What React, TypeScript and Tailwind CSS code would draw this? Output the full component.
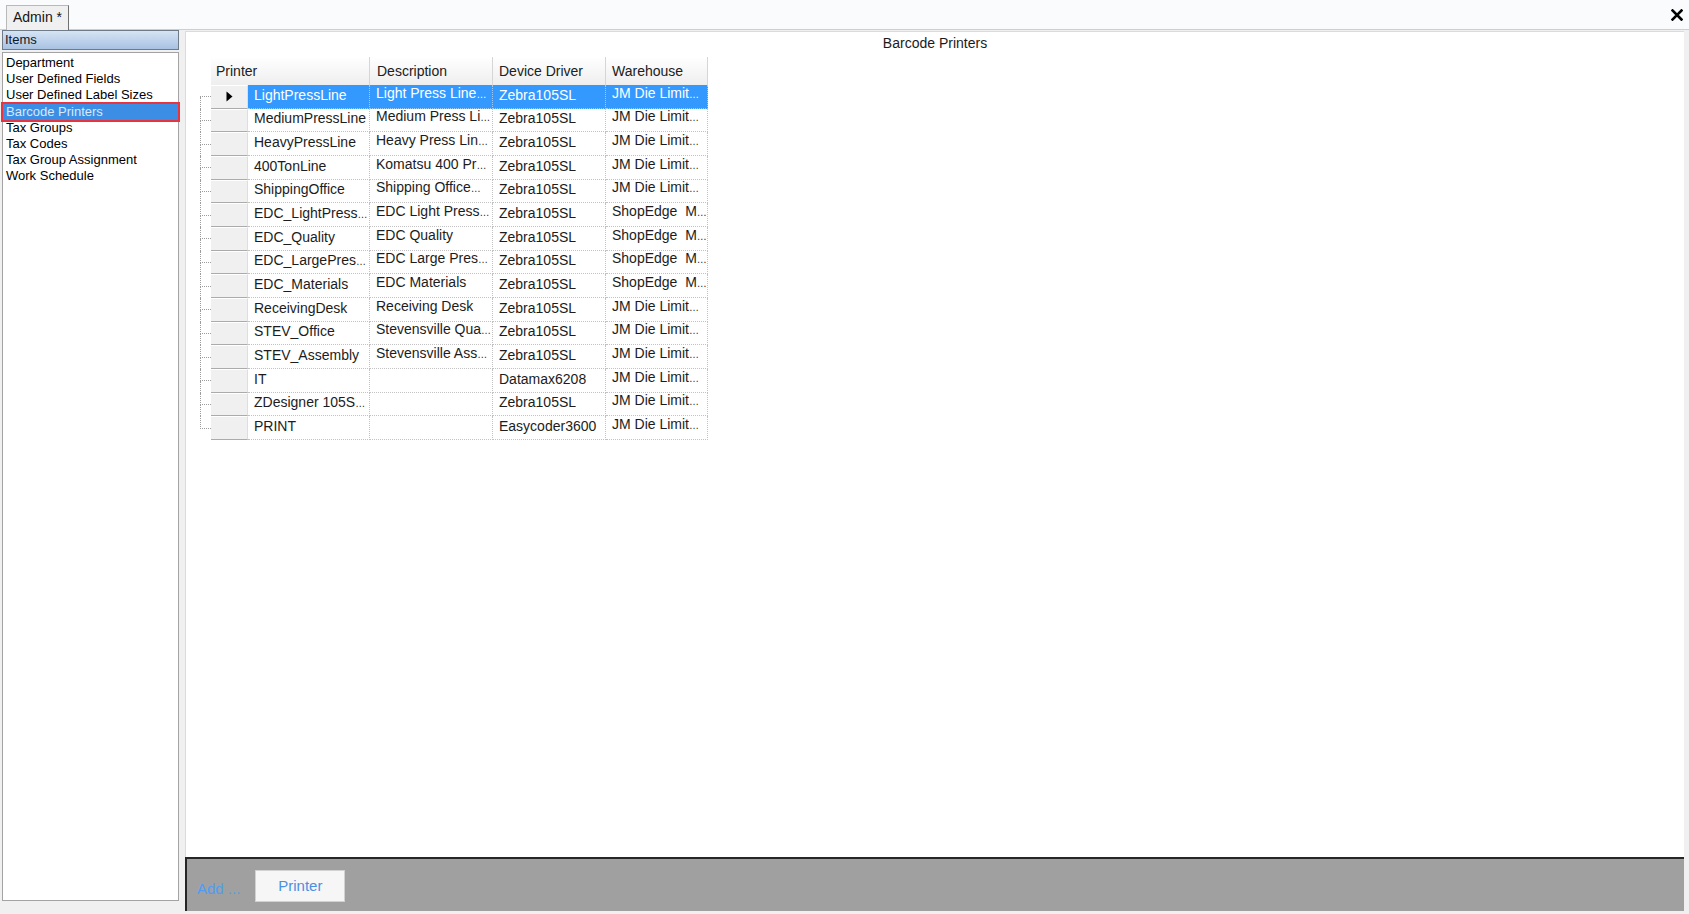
import React from "react";

const rows: string[][] = [
  ["LightPressLine", "Light Press Line…", "Zebra105SL", "JM Die Limit…"],
  ["MediumPressLine", "Medium Press Li…", "Zebra105SL", "JM Die Limit…"],
  ["HeavyPressLine", "Heavy Press Lin…", "Zebra105SL", "JM Die Limit…"],
  ["400TonLine", "Komatsu 400 Pr…", "Zebra105SL", "JM Die Limit…"],
  ["ShippingOffice", "Shipping Office…", "Zebra105SL", "JM Die Limit…"],
  ["EDC_LightPress…", "EDC Light Press…", "Zebra105SL", "ShopEdge  M…"],
  ["EDC_Quality", "EDC Quality", "Zebra105SL", "ShopEdge  M…"],
  ["EDC_LargePres…", "EDC Large Pres…", "Zebra105SL", "ShopEdge  M…"],
  ["EDC_Materials", "EDC Materials", "Zebra105SL", "ShopEdge  M…"],
  ["ReceivingDesk", "Receiving Desk", "Zebra105SL", "JM Die Limit…"],
  ["STEV_Office", "Stevensville Qua…", "Zebra105SL", "JM Die Limit…"],
  ["STEV_Assembly", "Stevensville Ass…", "Zebra105SL", "JM Die Limit…"],
  ["IT", "", "Datamax6208", "JM Die Limit…"],
  ["ZDesigner 105S…", "", "Zebra105SL", "JM Die Limit…"],
  ["PRINT", "", "Easycoder3600", "JM Die Limit…"],
];

const items = [
  "Department",
  "User Defined Fields",
  "User Defined Label Sizes",
  "Barcode Printers",
  "Tax Groups",
  "Tax Codes",
  "Tax Group Assignment",
  "Work Schedule",
];

function CellText({ text }: { text: string }) {
  if (text.endsWith("…")) {
    return (
      <span className="whitespace-pre">
        {text.slice(0, -1)}
        <span className="text-[10px] tracking-[-1px]">…</span>
      </span>
    );
  }
  return <span className="whitespace-pre">{text}</span>;
}

function Gutter({ first, last }: { first: boolean; last: boolean }) {
  return (
    <div className="w-[14px] pl-[3px] flex shrink-0">
      <div className="w-[11px] flex flex-col">
        <div
          className={
            "flex-1 border-b border-dotted border-b-[#9c9c9c] " +
            (first ? "" : "border-l border-l-[#9c9c9c]")
          }
        />
        <div className={"flex-1 " + (last ? "" : "border-l border-dotted border-l-[#9c9c9c]")} />
      </div>
    </div>
  );
}

export default function App() {
  const widths = ["w-[122px]", "w-[123px]", "w-[113px]", "w-[102px]"];
  return (
    <div className="w-[1689px] h-[914px] bg-[#f0f0f0] flex flex-col overflow-hidden font-['Liberation_Sans',Arial,sans-serif] text-black">
      {/* top tab strip */}
      <div className="h-[30px] shrink-0 bg-[#fafbfc] border-b border-[#c5d0dc] flex items-end justify-between pl-[6px] pr-[6px]">
        <div className="h-[25px] px-[6px] bg-[#f0f0f0] border border-b-0 border-[#b9b9b9] border-r-[#707070] text-[14px] leading-[22px] text-[#151515] -mb-px">
          Admin *
        </div>
        <svg className="self-center" width="12" height="12" viewBox="0 0 12 12">
          <path d="M1.5 1.5 L10.5 10.5 M10.5 1.5 L1.5 10.5" stroke="#000" strokeWidth="2.6" strokeLinecap="square" />
        </svg>
      </div>

      <div className="flex-1 flex min-h-0">
        {/* left panel */}
        <div className="w-[185px] shrink-0 pl-[2px] pr-[6px] pb-[13px] flex flex-col">
          <div className="h-[20px] shrink-0 border border-[#6f7b89] bg-gradient-to-b from-[#d6e4f4] to-[#a8c2e2] text-[13px] leading-[18px] pl-[2px] text-[#111827]">
            Items
          </div>
          <div className="flex-1 mt-[2px] bg-white border border-[#a3a3a3] pt-[2px] flex flex-col">
            {items.map((it) =>
              it === "Barcode Printers" ? (
                <div
                  key={it}
                  className="h-[16.2px] leading-[16.2px] text-[13px] pl-[3px] bg-[#3b8ee4] text-[#d9e8fb] outline-2 outline-[#e8343f] whitespace-nowrap"
                >
                  {it}
                </div>
              ) : (
                <div key={it} className="h-[16.2px] leading-[16.2px] text-[13px] pl-[3px] whitespace-nowrap">
                  {it}
                </div>
              )
            )}
          </div>
        </div>

        {/* right pane */}
        <div className="flex-1 mt-[1px] mb-[3px] mr-[5px] bg-white border-t border-l border-[#d3dce7] flex flex-col min-w-0">
          <div className="pt-[3px] text-center text-[14px] leading-[17px] text-[#1b1b1b]">Barcode Printers</div>

          <div className="mt-[5px] ml-[11px] flex flex-col">
            {/* header */}
            <div className="flex h-[28px]">
              <div className="w-[14px] shrink-0" />
              <div className="w-[159px] flex items-center pl-[5px] bg-gradient-to-b from-white to-[#eeeeee] border-r border-[#d6d6d6] text-[14px] text-[#202020]">
                Printer
              </div>
              <div className="w-[123px] flex items-center pl-[7px] bg-gradient-to-b from-white to-[#eeeeee] border-r border-[#d6d6d6] text-[14px] text-[#202020]">
                Description
              </div>
              <div className="w-[113px] flex items-center pl-[6px] bg-gradient-to-b from-white to-[#eeeeee] border-r border-[#d6d6d6] text-[14px] text-[#202020]">
                Device Driver
              </div>
              <div className="w-[102px] flex items-center pl-[6px] bg-gradient-to-b from-white to-[#eeeeee] border-r border-[#d6d6d6] text-[14px] text-[#202020]">
                Warehouse
              </div>
            </div>

            {rows.map((r, i) => {
              const sel = i === 0;
              return (
                <div key={i} className="flex h-[23.67px]">
                  <Gutter first={i === 0} last={i === rows.length - 1} />
                  <div className="w-[37px] shrink-0 bg-[#f0f0f0] border-t border-t-white border-b border-b-[#ababab] border-r border-r-[#dedede] flex items-center justify-center">
                    {sel && (
                      <svg width="7" height="11" viewBox="0 0 7 11">
                        <path d="M0.5 0.5 L6.5 5.5 L0.5 10.5 Z" fill="#000" />
                      </svg>
                    )}
                  </div>
                  {r.map((c, j) => (
                    <div
                      key={j}
                      className={
                        widths[j] +
                        " shrink-0 flex items-center pl-[6px] text-[14px] whitespace-nowrap overflow-hidden border-r border-b border-dotted " +
                        (j === 1 || j === 3 ? "pb-[6px] " : "pb-[2px] ") +
                        (sel
                          ? "bg-[#3399ff] text-white border-[#9ccbff]"
                          : "text-[#1c1c1c] border-[#c2c2c2]")
                      }
                    >
                      <CellText text={c} />
                    </div>
                  ))}
                </div>
              );
            })}
          </div>

          <div className="flex-1" />

          {/* bottom bar */}
          <div className="h-[54px] shrink-0 -ml-px border-t-2 border-l-2 border-[#262626] bg-[#a0a0a0] flex items-start pt-[11px] pl-[10px]">
            <div className="mt-[10px] text-[15px] leading-[18px] text-[#4d9df7]">Add ...</div>
            <div className="ml-[15px] w-[90px] h-[32px] bg-[#f6f6f6] border border-[#d2d2d2] flex items-center justify-center text-[15px] text-[#4a90e2]">
              Printer
            </div>
          </div>
        </div>
      </div>
    </div>
  );
}
